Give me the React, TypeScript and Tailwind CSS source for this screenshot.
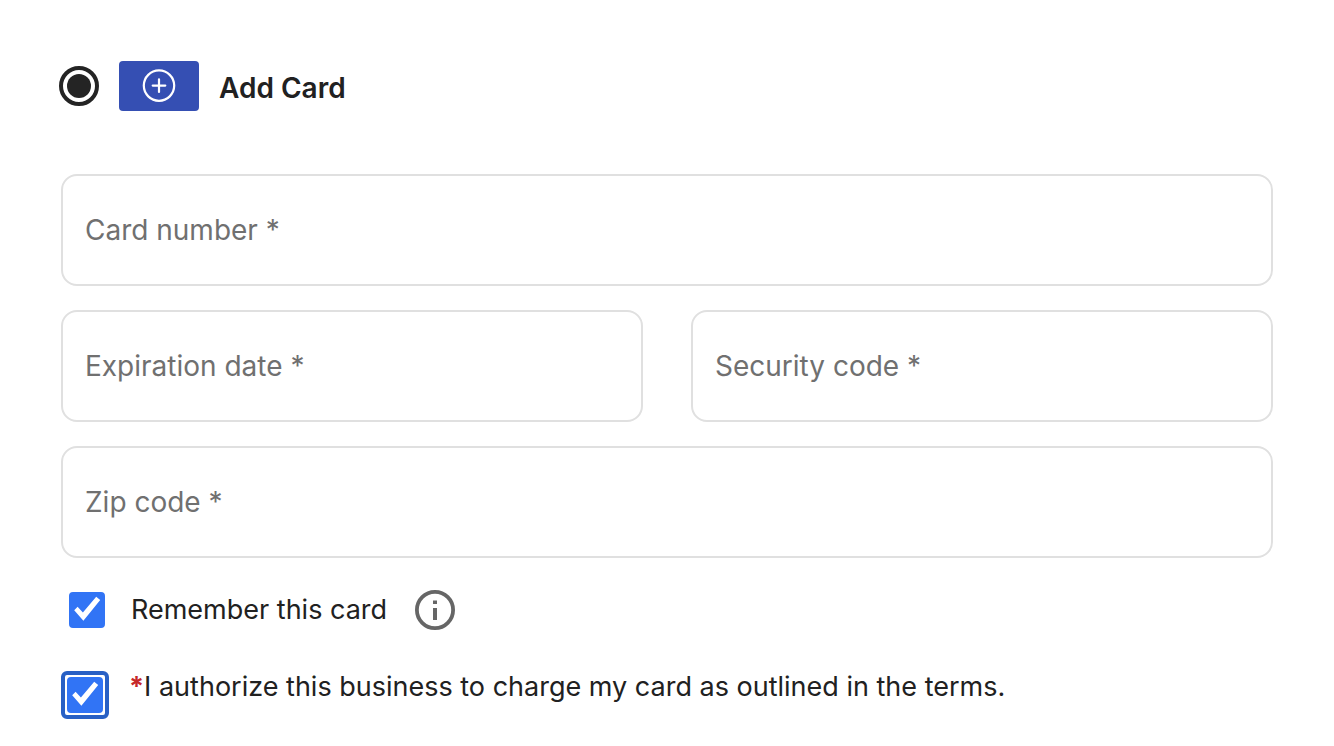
import { useId, useState } from "react";

function TextField({ label, autoComplete }: { label: string; autoComplete: string }) {
  return (
    <input
      type="text"
      required
      aria-label={label}
      placeholder={`${label} *`}
      autoComplete={autoComplete}
      className="h-28 w-full min-w-0 rounded-2xl border-2 border-[#e0e0e0] bg-white px-[22px] text-[28px] text-[#212121] outline-none placeholder:text-[#707070] focus:border-[#2860c5]"
    />
  );
}

function Checkbox({ id, outlined = false }: { id: string; outlined?: boolean }) {
  const [checked, setChecked] = useState(true);
  return (
    <span
      className={
        outlined
          ? "grid size-12 shrink-0 place-items-center rounded-md border-4 border-[#2860c5] bg-white"
          : "grid size-12 shrink-0 place-items-center"
      }
    >
      <input
        id={id}
        type="checkbox"
        checked={checked}
        onChange={(e) => setChecked(e.target.checked)}
        className="col-start-1 row-start-1 size-9 appearance-none rounded-[4px] border-2 border-[#757575] outline-none checked:border-[#3174f5] checked:bg-[#3174f5]"
      />
      {checked && (
        <svg viewBox="0 0 36 36" className="pointer-events-none col-start-1 row-start-1 size-9" aria-hidden="true">
          <path d="M5.2 18.2 8.6 14.8 13.9 20.4 27.2 4.8 31.2 8 14.4 28.8z" fill="#fff" />
        </svg>
      )}
    </span>
  );
}

export default function App() {
  const id = useId();
  return (
    <main className="bg-white px-[61px] pt-[61px] font-['Inter',sans-serif] text-[#212121]">
      <form onSubmit={(e) => e.preventDefault()}>
        <label className="-ml-0.5 flex h-[50px] items-center">
          <span className="grid size-10 shrink-0 place-items-center">
            <input
              type="radio"
              name="payment"
              defaultChecked
              className="peer col-start-1 row-start-1 size-10 appearance-none rounded-full border-4 border-[#242424] outline-none"
            />
            <span className="col-start-1 row-start-1 hidden size-6 rounded-full bg-[#242424] peer-checked:block" />
          </span>
          <svg viewBox="0 0 80 50" className="ml-5 h-[50px] w-20 shrink-0" aria-hidden="true">
            <rect width="80" height="50" rx="4" fill="#354fb3" />
            <g fill="none" stroke="#fff" strokeWidth="2.2">
              <circle cx="40" cy="24.6" r="15.2" />
              <path d="M40 18.3v12.6M33.7 24.6h12.6" strokeLinecap="round" />
            </g>
          </svg>
          <span className="ml-5 pt-1 text-[28px] leading-9 font-semibold">Add Card</span>
        </label>

        <div className="mt-[63px] grid grid-cols-2 gap-x-12 gap-y-6">
          <div className="col-span-2 flex">
            <TextField label="Card number" autoComplete="cc-number" />
          </div>
          <TextField label="Expiration date" autoComplete="cc-exp" />
          <TextField label="Security code" autoComplete="cc-csc" />
          <div className="col-span-2 flex">
            <TextField label="Zip code" autoComplete="postal-code" />
          </div>
        </div>

        <div className="mt-7 flex items-center pl-0.5">
          <Checkbox id={`${id}-remember`} />
          <label htmlFor={`${id}-remember`} className="ml-5 text-[27px] leading-9">
            Remember this card
          </label>
          <button type="button" aria-label="About remembering this card" className="ml-7 shrink-0">
            <svg viewBox="0 0 40 40" className="size-10" fill="#666">
              <circle cx="20" cy="20" r="18.1" fill="none" stroke="#666" strokeWidth="3.8" />
              <path d="M18 10.4h4v3.6h-4zM18 18h4v12h-4z" />
            </svg>
          </button>
        </div>

        <div className="mt-[37px] flex items-start">
          <Checkbox id={`${id}-authorize`} outlined />
          <label htmlFor={`${id}-authorize`} className="ml-5 text-[27px] leading-8">
            <span className="font-bold text-[#c62828]">*</span>I authorize this business to charge my card as outlined in the terms.
          </label>
        </div>
      </form>
    </main>
  );
}
